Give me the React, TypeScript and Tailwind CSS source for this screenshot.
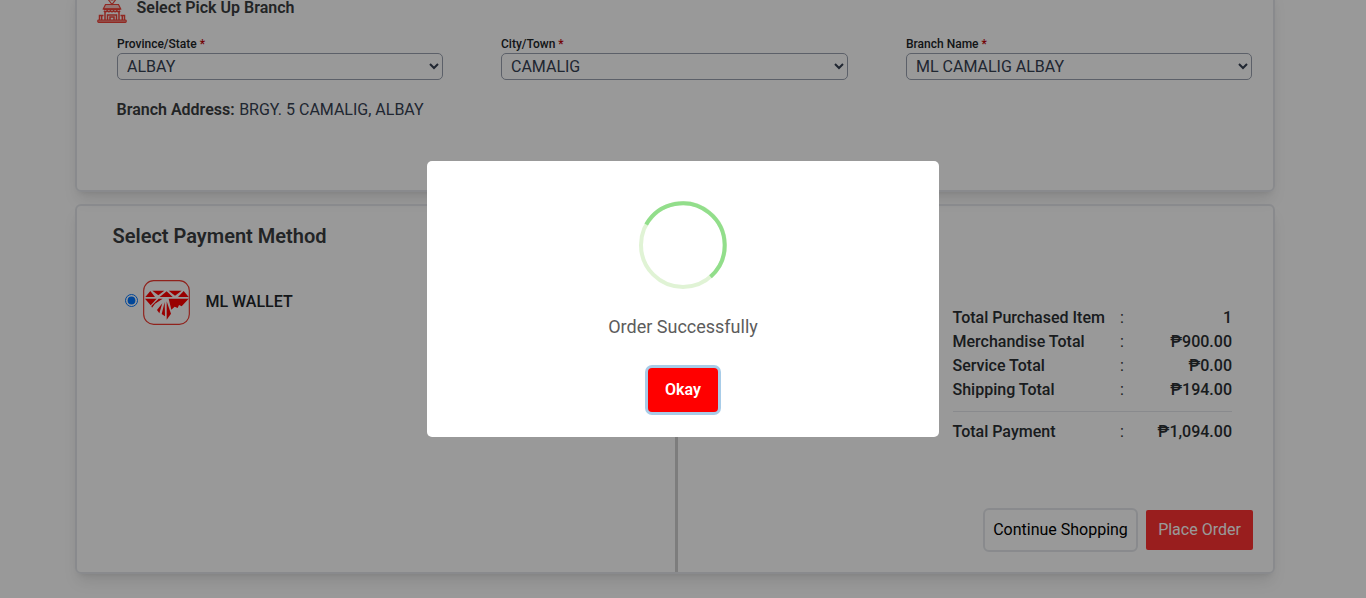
import React from "react";

function StoreIcon() {
  return (
    <svg
      viewBox="0 0 30 32"
      className="h-8 w-[30px] shrink-0"
      fill="none"
      stroke="#f0443a"
      strokeWidth="1.2"
    >
      <path d="M15 12.5 L10.5 6.5 A5 5 0 1 1 19.5 6.5 Z" />
      <circle cx="15" cy="6" r="2" />
      <path d="M8.5 12.5h13l2.2 4.5h-17.4z" fill="#f0443a" fillOpacity="0.3" />
      <path d="M6.5 17.2h17M7 18.7q1.6 2 3.2 0q1.6 2 3.2 0q1.6 2 3.2 0q1.6 2 3.2 0q1.6 2 3.2 0" strokeWidth="1.7" />
      <path d="M8 20v8M22 20v8M10.5 28v-5h9v5M13 28v-3h4v3" strokeWidth="1.5" />
      <path d="M2.5 28v-4.5h4M27.5 28v-4.5h-4M4.7 24v4M25.3 24v4" strokeWidth="1.5" />
      <rect x="0.8" y="28" width="28.4" height="2.4" rx="0.8" fill="#f0443a" fillOpacity="0.6" />
    </svg>
  );
}

function WalletIcon() {
  return (
    <svg viewBox="97 28 141 135" className="h-[45px] w-[47px] shrink-0">
      <rect x="99" y="30" width="137" height="131" rx="30" fill="none" stroke="#f03a30" strokeWidth="3.5" />
      <g fill="#ff0000">
        <path d="M119 61L133 79H104Z" />
        <path d="M125 60H161L143 74Z" />
        <path d="M147 79L168 62L186 79Z" />
        <path d="M174 60H213L193 75Z" />
        <path d="M202 79L219 61L234 79Z" />
        <path d="M103 84H138L120 104Z" />
        <path d="M144 84H156L133 99L124 111L122 106Z" />
        <path d="M174 84H234L213 107L205 103L201 112L192 108L182 117Z" />
        <path d="M155 98L146 128L139 118Z" />
        <path d="M162 94L163 137L153 130Z" />
        <path d="M168 92L181 129L168 147Z" />
      </g>
    </svg>
  );
}

function Field({ label, value, className }: { label: string; value: string; className: string }) {
  return (
    <div className={className}>
      <label className="block h-[17px] text-[12px] leading-4 font-medium text-[#212529]">
        {label} <span className="text-red-700">*</span>
      </label>
      <select
        defaultValue={value}
        className="block h-[27px] w-full rounded-[5px] border border-gray-400 bg-white px-[5px] text-[16px] leading-6 text-gray-700"
      >
        <option>{value}</option>
      </select>
    </div>
  );
}

function SummaryRow({ label, value }: { label: string; value: string }) {
  return (
    <div className="flex h-6 items-center text-[16px] leading-6 font-medium text-[#2b2f33]">
      <span className="w-[167.5px]">{label}</span>
      <span className="font-normal">:</span>
      <span className="ml-auto">{value}</span>
    </div>
  );
}

const totals = [
  { label: "Total Purchased Item", value: "1" },
  { label: "Merchandise Total", value: "₱900.00" },
  { label: "Service Total", value: "₱0.00" },
  { label: "Shipping Total", value: "₱194.00" },
];

export default function App() {
  return (
    <div className="relative h-[598px] overflow-hidden bg-white font-['Roboto','Noto_Sans',sans-serif] text-[#212529]">
      <div className="flex h-full flex-col pl-[75px]">
        <section className="-mt-3 h-[204px] w-[1200px] shrink-0 rounded-md border-2 border-gray-200 px-5 shadow-lg">
          <div className="flex h-[35px] items-start gap-[9.5px]">
            <div className="flex w-[30px] pt-0.5">
              <StoreIcon />
            </div>
            <h2 className="pt-2.5 text-[16px] leading-4 font-semibold text-[#3a3d40]">Select Pick Up Branch</h2>
          </div>
          <div className="flex pt-[11px] pl-5">
            <Field label="Province/State" value="ALBAY" className="w-[326px]" />
            <Field label="City/Town" value="CAMALIG" className="ml-[58px] w-[347px]" />
            <Field label="Branch Name" value="ML CAMALIG ALBAY" className="ml-[58px] w-[346px]" />
          </div>
          <p className="mt-[18px] pl-[19.5px] text-[16px] leading-6 text-gray-700">
            <span className="mr-[0.5px] font-semibold text-[#3a3d40]">Branch Address:</span> BRGY. 5 CAMALIG, ALBAY
          </p>
        </section>

        <section className="mt-3 flex h-[370px] w-[1200px] shrink-0 rounded-md border-2 border-gray-200 shadow-lg">
          <div className="w-[601px] border-r-3 border-[#d0d0d0] pt-4 pl-[35.5px]">
            <h2 className="text-[20px] leading-7 font-semibold text-[#3a3d40]">Select Payment Method</h2>
            <div className="mt-[29.5px] ml-[12.5px] flex items-center">
              <input
                id="ml-wallet"
                type="radio"
                name="payment"
                defaultChecked
                className="mr-[4.5px] -mt-[3px] size-[13px]"
              />
              <WalletIcon />
              <label htmlFor="ml-wallet" className="-mt-px ml-4 text-[16px] leading-6 font-medium">
                ML WALLET
              </label>
            </div>
          </div>
          <div className="flex flex-1 flex-col items-end pt-[100px] pr-5">
            <div className="mr-[21px] w-[279.5px]">
              {totals.map((row) => (
                <SummaryRow key={row.label} label={row.label} value={row.value} />
              ))}
              <div className="mt-[9px] border-t border-gray-200 pt-2">
                <SummaryRow label="Total Payment" value="₱1,094.00" />
              </div>
            </div>
            <div className="mt-16 flex items-center gap-2">
              <button className="h-11 w-[155px] rounded-md border-2 border-gray-200 text-[16px] whitespace-nowrap text-black">
                Continue Shopping
              </button>
              <button className="h-10 w-[107px] rounded-xs bg-[#ff3333] text-[16px] text-white">Place Order</button>
            </div>
          </div>
        </section>
      </div>

      <div className="absolute inset-0 flex items-start justify-center bg-black/40 pt-[161px]">
        <div
          role="dialog"
          className="flex h-[276px] w-[512px] flex-col items-center rounded-[5px] bg-white pt-10"
        >
          <svg viewBox="0 0 88 88" className="size-[88px]" fill="none" strokeWidth="4">
            <circle cx="44" cy="44" r="42" stroke="#a5dc86" strokeOpacity="0.35" />
            <path d="M7.2 23.5A42 42 0 1 1 71.5 75.8" stroke="#92de8b" />
          </svg>
          <p className="mt-6 text-[18px] leading-7 text-[#5c5c5c]">Order Successfully</p>
          <button className="mt-[27px] h-11 w-[70px] rounded-[4px] bg-[#ff0000] text-[16px] font-semibold text-white shadow-[0_0_0_3px_#a8cce8]">
            Okay
          </button>
        </div>
      </div>
    </div>
  );
}
